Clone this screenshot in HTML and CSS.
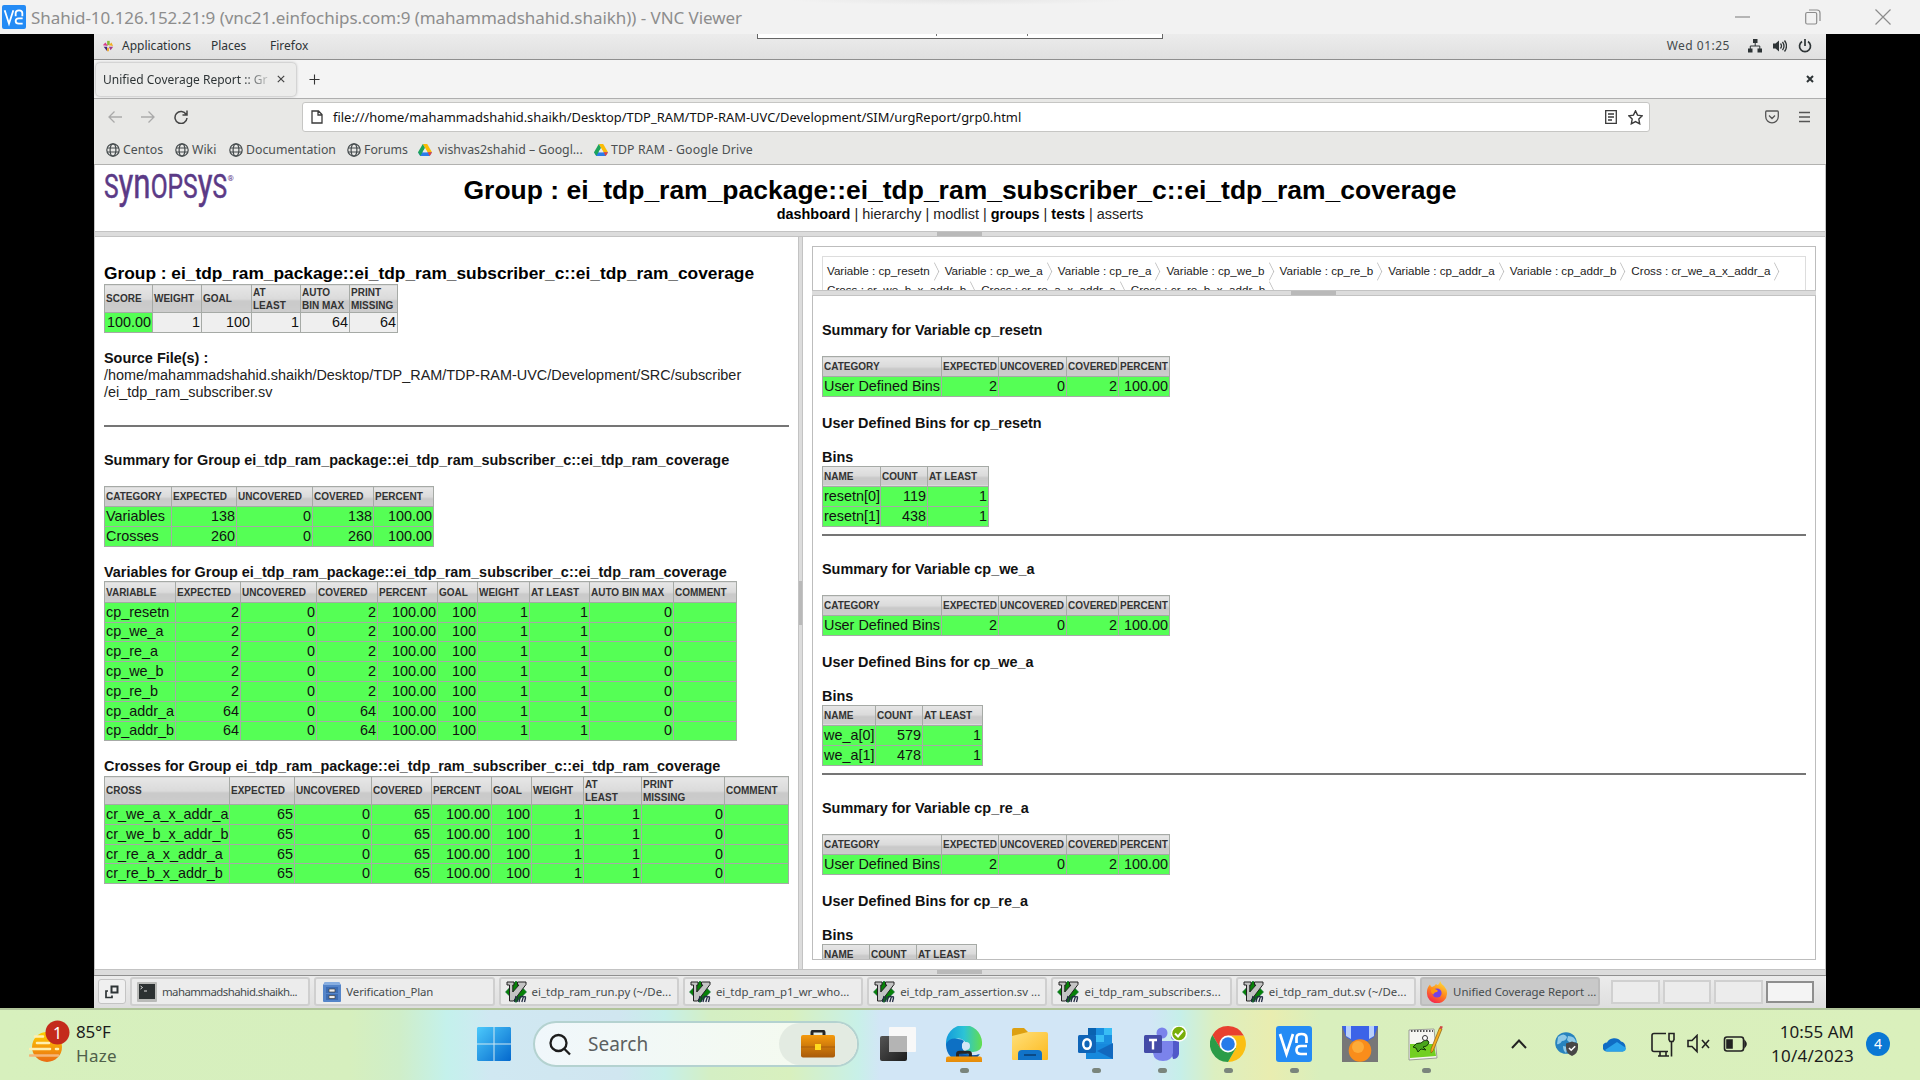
FILE: index.html
```html
<!DOCTYPE html>
<html lang="en">
<head>
<meta charset="utf-8">
<title>Shahid-10.126.152.21:9 - VNC Viewer</title>
<link rel="stylesheet" href="styles.css">
</head>
<body>
<svg width="0" height="0" class="defs">
  <defs>
    <linearGradient id="gSun" x1="0" y1="0" x2="0" y2="1"><stop offset="0" stop-color="#ffd000"/><stop offset="1" stop-color="#ea6a12"/></linearGradient>
    <linearGradient id="gWin" x1="0" y1="0" x2="1" y2="1"><stop offset="0" stop-color="#4cc9fb"/><stop offset="1" stop-color="#0468cd"/></linearGradient>
    <linearGradient id="gBag" x1="0" y1="0" x2="0" y2="1"><stop offset="0" stop-color="#f59a0c"/><stop offset="1" stop-color="#a85a0a"/></linearGradient>
    <linearGradient id="gEdge" x1="0" y1="0" x2="1" y2="0"><stop offset="0" stop-color="#149bdc"/><stop offset=".5" stop-color="#2cc3d6"/><stop offset="1" stop-color="#62de4e"/></linearGradient>
    <linearGradient id="gFold" x1="0" y1="0" x2="1" y2="1"><stop offset="0" stop-color="#ffe07a"/><stop offset="1" stop-color="#fcb91e"/></linearGradient>
    <linearGradient id="gDark" x1="0" y1="0" x2="1" y2="1"><stop offset="0" stop-color="#555"/><stop offset="1" stop-color="#1c1c1c"/></linearGradient>
    <linearGradient id="gFox" x1=".8" y1="0" x2=".3" y2="1"><stop offset="0" stop-color="#ffe23a"/><stop offset=".5" stop-color="#ff8a1c"/><stop offset="1" stop-color="#f5204f"/></linearGradient>
    <symbol id="globe" viewBox="0 0 14 14"><g fill="none" stroke="#454b4d" stroke-width="1.2"><circle cx="7" cy="7" r="6.2"/><ellipse cx="7" cy="7" rx="2.9" ry="6.2"/><path d="M1 5h12M1 9h12"/></g></symbol>
    <symbol id="drive" viewBox="0 0 14 14"><path d="M4.800 1h4.400L14 9.300H9.500z" fill="#fbbc05"/><path d="M0 9.300h14L11.700 13H2.300z" fill="#2b7bea"/><path d="M9.600 9.300H14L11.700 13z" fill="#ea4335"/><path d="M4.800 1L0 9.300 2.300 13 7 5z" fill="#1da45b"/><path d="M7 5.200L4.600 9.300h4.800z" fill="#ecebe9"/></symbol>
    <symbol id="vim" viewBox="0 0 22 22"><path d="M11 0l10.500 11L11 21.500.5 11z" fill="#078207" stroke="#063" stroke-width=".6"/><path d="M2 1h7v3H7.800v7L14 4h-1.500V1H21v2.500L8.500 20H4.500V4H2z" fill="#c4c4c4" stroke="#222" stroke-width="1"/><path d="M11 15l-1.500 6M13 15.500l-1 5.500M15.500 15l-1.500 6M16 16q3-2 2 1l-1.200 4M18 16.500q3-2 2.500.5l-1 4" stroke="#222b44" stroke-width="1.300" fill="none"/></symbol>
    <symbol id="vnc" viewBox="0 0 36 36"><rect width="36" height="36" rx="3" fill="#248bf5"/><g fill="none" stroke="#fff" stroke-width="2.700"><path d="M4 8l6.500 20L17 8"/><path d="M20.500 17V12q0-4 5-4t5 4v5"/><path d="M31 20h-6q-4.500 0-4.500 4t4.500 4h6"/></g></symbol>
    <symbol id="bag" viewBox="0 0 34 28"><path d="M11 6V2.500Q11 1 13 1h8q2 0 2 1.500V6" fill="none" stroke="#262626" stroke-width="3"/><rect y="5" width="34" height="22.500" rx="2" fill="url(#gBag)"/><path d="M0 17h34" stroke="#a85d0c" stroke-width="1"/><rect x="14" y="14" width="6" height="6" fill="#ffd91e"/></symbol>
  </defs>
</svg>

<header class="titlebar">
  <svg class="title-logo" viewBox="0 0 36 36" preserveAspectRatio="none"><use href="#vnc"/></svg>
  <span class="title-text">Shahid-10.126.152.21:9 (vnc21.einfochips.com:9 (mahammadshahid.shaikh)) - VNC Viewer</span>
  <div class="win-buttons">
    <svg viewBox="0 0 16 16"><path d="M0 8h15"/></svg>
    <svg viewBox="0 0 16 16"><rect x=".7" y="3.500" width="11" height="11.500" rx="1.500"/><path d="M4 1h8q3 0 3 3v8"/></svg>
    <svg viewBox="0 0 16 16"><path d="M.5.500l15 15M15.500.500l-15 15"/></svg>
  </div>
</header>

<main class="desktop">
  <div class="vnc-tab"><i></i><i></i></div>
  <nav class="panel-top">
    <svg class="apps" viewBox="0 0 14 14"><path d="M6 1h3v5H6z" fill="#8ab83a"/><path d="M1 6l3-3 3 4z" fill="#d63c8c"/><path d="M8 6l3-3 2 4z" fill="#f0b020"/><path d="M2 8h4v5z" fill="#42247a"/><path d="M8 8h5l-3 4z" fill="#a33b8a"/><path d="M6 9h2v4H6z" fill="#efa724"/></svg>
    <span class="m1">Applications</span><span class="m2">Places</span><span class="m3">Firefox</span>
    <span class="clock">Wed 01:25</span>
    <div class="sys">
      <svg viewBox="0 0 14 14"><path d="M5 0h4.500v4H5zM0 9.500h4.500v4H0zM9.500 9.500H14v4H9.500z" fill="#2e3436"/><path d="M7.200 4v3M2.300 10V7h9.500v3" stroke="#2e3436" fill="none"/></svg>
      <svg viewBox="0 0 14 14"><path d="M0 4.500h2.500L6 1.500v11L2.500 9.500H0z" fill="#2e3436"/><path d="M7.500 4.500q2 2.500 0 5M9.500 2.800q3 4.200 0 8.400M11.500 1.500q4 5.500 0 11" stroke="#2e3436" fill="none" stroke-width="1.300"/></svg>
      <svg viewBox="0 0 14 14"><path d="M4 2.500a5.500 5.500 0 1 0 6 0M7 0v7" stroke="#2e3436" fill="none" stroke-width="1.700"/></svg>
    </div>
  </nav>

  <div class="tabstrip">
    <div class="tab"><span class="tab-title">Unified Coverage Report :: Gr</span><svg viewBox="0 0 8 8"><path d="M.8.800l6.400 6.400M7.200.800L.8 7.200"/></svg></div>
    <svg class="plus" viewBox="0 0 12 12"><path d="M6 .5v11M.5 6h11"/></svg>
    <svg class="strip-close" viewBox="0 0 8 8"><path d="M1 1l6 6M7 1L1 7"/></svg>
  </div>

  <div class="navbar">
    <div class="nav-icons">
      <svg viewBox="0 0 14 14" class="dim"><path d="M14 7H1.500M6.500 1.500L1 7l5.500 5.500"/></svg>
      <svg viewBox="0 0 14 14" class="dim"><path d="M0 7h12.500M7.500 1.500L13 7l-5.500 5.500"/></svg>
      <svg viewBox="0 0 14 14" class="reload"><path d="M12.200 4.500A6 6 0 1 0 13 8M13 .5V5H8.500"/></svg>
    </div>
    <div class="urlbar">
      <svg viewBox="0 0 12 14" class="doc"><path d="M1 1h6.500L11 4.500V13H1zM7 1v4h4"/></svg>
      <span class="url">file:///home/mahammadshahid.shaikh/Desktop/TDP_RAM/TDP-RAM-UVC/Development/SIM/urgReport/grp0.html</span>
      <svg viewBox="0 0 12 14" class="reader"><path d="M.7.700h10.600v12.600H.7zM3 4h6M3 7h6M3 10h4"/></svg>
      <svg viewBox="0 0 14 14" class="star"><path d="M7 .8l1.900 4 4.400.6-3.200 3 .8 4.500L7 10.800 3.100 12.900l.8-4.500-3.200-3 4.400-.6z"/></svg>
    </div>
    <svg viewBox="0 0 14 14" class="pocket"><path d="M1.500 1h11q.8 0 .8 1v4.500a6.300 6.300 0 0 1-12.600 0V2q0-1 .8-1zM4 5.500l3 3 3-3"/></svg>
    <svg viewBox="0 0 12 12" class="burger"><path d="M0 1.500h11M0 6h11M0 10.500h11"/></svg>
  </div>

  <div class="bookmarks">
    <a><svg><use href="#globe"/></svg>Centos</a>
    <a><svg><use href="#globe"/></svg>Wiki</a>
    <a><svg><use href="#globe"/></svg>Documentation</a>
    <a><svg><use href="#globe"/></svg>Forums</a>
    <a class="wide"><svg><use href="#drive"/></svg>vishvas2shahid – Googl...</a>
    <a><svg><use href="#drive"/></svg>TDP RAM - Google Drive</a>
  </div>

  <section class="page">
    <header class="report-head">
      <svg class="synopsys" viewBox="0 0 130 32">
        <text x="0" y="25" textLength="123" lengthAdjust="spacingAndGlyphs" font-family="Roboto, sans-serif" font-size="33" fill="#5b3a86" stroke="#5b3a86" stroke-width=".5">S<tspan font-size="42">yn</tspan>OPS<tspan font-size="42">y</tspan>S</text>
        <text x="123.500" y="8" font-family="Roboto, sans-serif" font-size="8" fill="#5b3a86">®</text>
      </svg>
      <h1>Group : ei_tdp_ram_package::ei_tdp_ram_subscriber_c::ei_tdp_ram_coverage</h1>
      <div class="links"><b>dashboard</b> | hierarchy | modlist | <b>groups</b> | <b>tests</b> | asserts</div>
    </header>
    <div class="split-h"><i></i></div>

    <div class="frames">
      <div class="left">
        <h2>Group : ei_tdp_ram_package::ei_tdp_ram_subscriber_c::ei_tdp_ram_coverage</h2>
        <table class="tb score tall">
          <tr><th>SCORE</th><th>WEIGHT</th><th>GOAL</th><th>AT<br>LEAST</th><th>AUTO<br>BIN MAX</th><th>PRINT<br>MISSING</th></tr>
          <tr class="plain"><td class="ok">100.00</td><td>1</td><td>100</td><td>1</td><td>64</td><td>64</td></tr>
        </table>
        <p class="source"><b>Source File(s) :</b><br>/home/mahammadshahid.shaikh/Desktop/TDP_RAM/TDP-RAM-UVC/Development/SRC/subscriber<br>/ei_tdp_ram_subscriber.sv</p>
        <hr class="l-rule">
        <h3 class="h-summary">Summary for Group ei_tdp_ram_package::ei_tdp_ram_subscriber_c::ei_tdp_ram_coverage</h3>
        <table class="tb summary">
          <tr><th>CATEGORY</th><th>EXPECTED</th><th>UNCOVERED</th><th>COVERED</th><th>PERCENT</th></tr>
          <tr><td>Variables</td><td>138</td><td>0</td><td>138</td><td>100.00</td></tr>
          <tr><td>Crosses</td><td>260</td><td>0</td><td>260</td><td>100.00</td></tr>
        </table>
        <h3 class="h-vars">Variables for Group ei_tdp_ram_package::ei_tdp_ram_subscriber_c::ei_tdp_ram_coverage</h3>
        <table class="tb vars">
          <tr><th>VARIABLE</th><th>EXPECTED</th><th>UNCOVERED</th><th>COVERED</th><th>PERCENT</th><th>GOAL</th><th>WEIGHT</th><th>AT LEAST</th><th>AUTO BIN MAX</th><th>COMMENT</th></tr>
          <tr><td>cp_resetn</td><td>2</td><td>0</td><td>2</td><td>100.00</td><td>100</td><td>1</td><td>1</td><td>0</td><td></td></tr>
          <tr><td>cp_we_a</td><td>2</td><td>0</td><td>2</td><td>100.00</td><td>100</td><td>1</td><td>1</td><td>0</td><td></td></tr>
          <tr><td>cp_re_a</td><td>2</td><td>0</td><td>2</td><td>100.00</td><td>100</td><td>1</td><td>1</td><td>0</td><td></td></tr>
          <tr><td>cp_we_b</td><td>2</td><td>0</td><td>2</td><td>100.00</td><td>100</td><td>1</td><td>1</td><td>0</td><td></td></tr>
          <tr><td>cp_re_b</td><td>2</td><td>0</td><td>2</td><td>100.00</td><td>100</td><td>1</td><td>1</td><td>0</td><td></td></tr>
          <tr><td>cp_addr_a</td><td>64</td><td>0</td><td>64</td><td>100.00</td><td>100</td><td>1</td><td>1</td><td>0</td><td></td></tr>
          <tr><td>cp_addr_b</td><td>64</td><td>0</td><td>64</td><td>100.00</td><td>100</td><td>1</td><td>1</td><td>0</td><td></td></tr>
        </table>
        <h3 class="h-cross">Crosses for Group ei_tdp_ram_package::ei_tdp_ram_subscriber_c::ei_tdp_ram_coverage</h3>
        <table class="tb cross tall">
          <tr><th>CROSS</th><th>EXPECTED</th><th>UNCOVERED</th><th>COVERED</th><th>PERCENT</th><th>GOAL</th><th>WEIGHT</th><th>AT<br>LEAST</th><th>PRINT<br>MISSING</th><th>COMMENT</th></tr>
          <tr><td>cr_we_a_x_addr_a</td><td>65</td><td>0</td><td>65</td><td>100.00</td><td>100</td><td>1</td><td>1</td><td>0</td><td></td></tr>
          <tr><td>cr_we_b_x_addr_b</td><td>65</td><td>0</td><td>65</td><td>100.00</td><td>100</td><td>1</td><td>1</td><td>0</td><td></td></tr>
          <tr><td>cr_re_a_x_addr_a</td><td>65</td><td>0</td><td>65</td><td>100.00</td><td>100</td><td>1</td><td>1</td><td>0</td><td></td></tr>
          <tr><td>cr_re_b_x_addr_b</td><td>65</td><td>0</td><td>65</td><td>100.00</td><td>100</td><td>1</td><td>1</td><td>0</td><td></td></tr>
        </table>
      </div>
      <div class="split-v"><i></i></div>
      <div class="right">
        <div class="inner">
          <div class="crumb-pane">
            <div class="crumbs">
              <span>Variable : cp_resetn</span><span>Variable : cp_we_a</span><span>Variable : cp_re_a</span><span>Variable : cp_we_b</span><span>Variable : cp_re_b</span><span>Variable : cp_addr_a</span><span>Variable : cp_addr_b</span><span>Cross : cr_we_a_x_addr_a</span>
              <span>Cross : cr_we_b_x_addr_b</span><span>Cross : cr_re_a_x_addr_a</span><span>Cross : cr_re_b_x_addr_b</span>
            </div>
          </div>
          <div class="split-i"><i></i></div>
          <div class="detail">
            <article>
              <h3>Summary for Variable cp_resetn</h3>
              <table class="tb cat">
                <tr><th>CATEGORY</th><th>EXPECTED</th><th>UNCOVERED</th><th>COVERED</th><th>PERCENT</th></tr>
                <tr><td>User Defined Bins</td><td>2</td><td>0</td><td>2</td><td>100.00</td></tr>
              </table>
              <h3 class="h-udb">User Defined Bins for cp_resetn</h3>
              <h3 class="h-bins">Bins</h3>
              <table class="tb bins b1">
                <tr><th>NAME</th><th>COUNT</th><th>AT LEAST</th></tr>
                <tr><td>resetn[0]</td><td>119</td><td>1</td></tr>
                <tr><td>resetn[1]</td><td>438</td><td>1</td></tr>
              </table>
              <hr>
            </article>
            <article>
              <h3>Summary for Variable cp_we_a</h3>
              <table class="tb cat">
                <tr><th>CATEGORY</th><th>EXPECTED</th><th>UNCOVERED</th><th>COVERED</th><th>PERCENT</th></tr>
                <tr><td>User Defined Bins</td><td>2</td><td>0</td><td>2</td><td>100.00</td></tr>
              </table>
              <h3 class="h-udb">User Defined Bins for cp_we_a</h3>
              <h3 class="h-bins">Bins</h3>
              <table class="tb bins b2">
                <tr><th>NAME</th><th>COUNT</th><th>AT LEAST</th></tr>
                <tr><td>we_a[0]</td><td>579</td><td>1</td></tr>
                <tr><td>we_a[1]</td><td>478</td><td>1</td></tr>
              </table>
              <hr>
            </article>
            <article>
              <h3>Summary for Variable cp_re_a</h3>
              <table class="tb cat">
                <tr><th>CATEGORY</th><th>EXPECTED</th><th>UNCOVERED</th><th>COVERED</th><th>PERCENT</th></tr>
                <tr><td>User Defined Bins</td><td>2</td><td>0</td><td>2</td><td>100.00</td></tr>
              </table>
              <h3 class="h-udb">User Defined Bins for cp_re_a</h3>
              <h3 class="h-bins">Bins</h3>
              <table class="tb bins b3">
                <tr><th>NAME</th><th>COUNT</th><th>AT LEAST</th></tr>
              </table>
            </article>
          </div>
        </div>
      </div>
    </div>
    <div class="split-h bottom"><i></i></div>
  </section>

  <footer class="panel-bottom">
    <div class="show-desk"><svg viewBox="0 0 14 14"><path d="M6.500 1.500h6v6h-6z" stroke-width="2"/><path d="M3 6H1v6.500h6V10.500" stroke-width="1.700"/></svg></div>
    <div class="task term"><svg viewBox="0 0 20 20"><rect width="20" height="20" rx="1" fill="#b9bab8"/><rect x="2" y="2" width="16" height="15" fill="#2c3132"/><path d="M3.500 4l2 1.500-2 1.500M7 9h3" stroke="#ddd" fill="none"/></svg>mahammadshahid.shaikh...</div>
    <div class="task cab"><svg viewBox="0 0 18 20"><path d="M2 0h14l2 3v16q0 1-1 1H1q-1 0-1-1V3z" fill="#5585c9"/><path d="M2 0h14l2 3H0z" fill="#88aee0"/><path d="M3 5h12v6H3zM3 12h12v6H3z" fill="#3c6cb3"/><path d="M6 7h6v3H6zM6 13.500h6v3H6z" fill="#eee" stroke="#444" stroke-width=".7"/></svg>Verification_Plan</div>
    <div class="task v"><svg><use href="#vim"/></svg>ei_tdp_ram_run.py (~/De...</div>
    <div class="task v"><svg><use href="#vim"/></svg>ei_tdp_ram_p1_wr_who...</div>
    <div class="task v"><svg><use href="#vim"/></svg>ei_tdp_ram_assertion.sv ...</div>
    <div class="task v"><svg><use href="#vim"/></svg>ei_tdp_ram_subscriber.s...</div>
    <div class="task v"><svg><use href="#vim"/></svg>ei_tdp_ram_dut.sv (~/De...</div>
    <div class="task v on"><svg viewBox="0 0 22 22"><path d="M14 0q1 3 4 5 3.500 4 3 8A10 9.500 0 0 1 1 12.500Q.5 7 4 3.500q.5 2 2 2.500 3-1 4-3 1 1 2 1 2-1.500 2-4z" fill="url(#gFox)"/><circle cx="11" cy="12" r="4.600" fill="#7542e5"/><path d="M5 8.500q3-1.500 5 0 3 1 1 2.500-3 0-3.500 2.500Q4.500 12 5 8.500z" fill="#ff980e"/></svg>Unified Coverage Report ...</div>
    <div class="spaces"><i></i><i></i><i></i><i class="cur"></i></div>
  </footer>
</main>

<footer class="taskbar">
  <div class="weather">
    <svg viewBox="0 0 42 54"><ellipse cx="18" cy="32" rx="15" ry="15" fill="url(#gSun)"/><g stroke-width="2.600" stroke-linecap="round" fill="none"><path d="M6 21.500h8M8 28h12M1 34h20M27 34h2" stroke="#fff0b0"/><path d="M1 40.500h28" stroke="#f5b577"/></g><circle cx="28.500" cy="17.500" r="12" fill="#c42b1c"/><text x="28.500" y="23.500" text-anchor="middle" font-family="Noto Sans, sans-serif" font-size="16" fill="#fff">1</text></svg>
    <div class="wtext"><span>85°F</span><span class="haze">Haze</span></div>
  </div>
  <div class="start"><svg viewBox="0 0 34 34"><path d="M1 0h15.500v16.500H0V1zM17.500 0H33l1 1v15.500H17.500zM0 17.500h16.500V34H1l-1-1zM17.500 17.500H34V33l-1 1H17.500z" fill="url(#gWin)"/></svg></div>
  <div class="search">
    <svg class="mag" viewBox="0 0 22 22"><circle cx="9.500" cy="9.500" r="8" /><path d="M15 15l6 6"/></svg>
    <span>Search</span>
    <div class="bagpill"><svg><use href="#bag"/></svg></div>
  </div>
  <div class="apps-row">
    <div class="slot"><svg viewBox="0 0 36 36"><rect y="10" width="27" height="25" rx="2" fill="url(#gDark)"/><rect x="9" y="1" width="27" height="25" rx="1" fill="#f8f8f8"/><path d="M9 10h18v16H10q-1 0-1-1z" fill="#b4b4b4"/></svg></div>
    <div class="slot run"><svg viewBox="0 0 36 36"><path d="M0 18A18 18 0 0 1 36 16q1 9-9 10-7 0-8-3 3-3 1-6-4-6-11-4Q3 14 0 21z" fill="url(#gEdge)"/><path d="M0 18q4-7 12-5 4 0 6 2-5 6 2 12 6 4 14 1-6 9-16 8Q0 34 0 18z" fill="#0d70c4"/><path d="M12 25q6 7 21 3.500-6 8.500-16 7.500z" fill="#104f9a"/><circle cx="20" cy="20" r="4" fill="#d2e6f6"/><svg x="0" y="22" width="18" height="14"><use href="#bag"/></svg></svg></div>
    <div class="slot"><svg viewBox="0 0 36 36"><path d="M0 4q0-2 2-2h10l4 4v6H0z" fill="#dda011"/><path d="M0 10l16-4h18q2 0 2 2v25q0 1-1 1H1q-1 0-1-1z" fill="url(#gFold)"/><path d="M6 34v-6q0-4 4-4h16q4 0 4 4v6z" fill="#1173c8"/><path d="M12 29h12" stroke="#0b4a86" stroke-width="2"/></svg></div>
    <div class="slot run"><svg viewBox="0 0 36 36"><rect x="10" y="2" width="24" height="20" fill="#1a8fe0"/><path d="M10 2h8v7h-8z" fill="#0a62b0"/><path d="M26 2h8v7h-8zM18 9h8v7h-8z" fill="#38bdf5"/><path d="M8 18l27 0v15H8z" fill="#1689dd"/><path d="M35 17v16L19 25z" fill="#1168be"/><rect y="9" width="18" height="18" rx="1.500" fill="#0f65b8"/><ellipse cx="9" cy="18" rx="3.800" ry="4.800" fill="none" stroke="#fff" stroke-width="2.400"/></svg></div>
    <div class="slot run"><svg viewBox="0 0 44 36" class="teams"><circle cx="18" cy="7" r="5.500" fill="#7b83eb"/><path d="M24 15h11v13q-1 5-6 5z" fill="#5059c9"/><circle cx="31" cy="10" r="4" fill="#5059c9"/><path d="M9 15h20v12q-1 8-10 8T9 27z" fill="#7b83eb"/><rect y="9" width="18" height="18" rx="1.500" fill="#444ba8"/><path d="M5 14h8M9 14v9.500" stroke="#fff" stroke-width="2.400"/><circle cx="35" cy="7.500" r="7.500" fill="#79ae09" stroke="#fff" stroke-width="1.500"/><path d="M31 7.500l3 3 5-6" stroke="#fff" stroke-width="2" fill="none"/></svg></div>
    <div class="slot run"><svg viewBox="0 0 36 36"><path d="M18 9.500h15.800l.9 2A18 18 0 0 1 18 36l8-14z" fill="#fbbf13"/><path d="M2.400 9A18 18 0 0 1 33.800 9.500H18L10 22z" fill="#e8402f"/><path d="M2.400 9L10.500 22.500 26 22l-8 14A18 18 0 0 1 2.400 9z" fill="#2b9c48"/><circle cx="18" cy="18" r="8.500" fill="#fff"/><circle cx="18" cy="18" r="6.800" fill="#277bea"/></svg></div>
    <div class="slot run"><svg><use href="#vnc"/></svg></div>
    <div class="slot"><svg viewBox="0 0 36 36"><path d="M0 0h36v36H0z" fill="#777"/><path d="M0 0h36l-4 11-8 5H12l-8-5z" fill="#3c63e8"/><path d="M4 0h5v13l-5-3zM27 0h5v10l-5 3z" fill="#b9d0fb"/><circle cx="18" cy="24.500" r="11.300" fill="#f98d1b"/><circle cx="16" cy="21" r="6" fill="#fdab38"/></svg></div>
    <div class="slot run"><svg viewBox="0 0 36 36"><path d="M1 4l25-1 3 29-28 2z" fill="#f6f6f2" stroke="#888" stroke-width=".8"/><path d="M2 18h24l2 12-26 2z" fill="#72cf22"/><path d="M3 5h22" stroke="#555" stroke-width="2" stroke-dasharray="1.500 1.500"/><path d="M5 21q3-5 8-4l4-3q4 0 4 3-2 4-6 4l3 3-5-1-3 3-2-4z" fill="#4aa51c" stroke="#163b08" stroke-width="1"/><circle cx="17" cy="12" r="2.500" fill="#fff" stroke="#333"/><path d="M31.500 2l2.500 1-9 22-2 2 0-4z" fill="#f6ae1d" stroke="#8c5d10" stroke-width=".7"/><path d="M31.500 2l2.500 1 .8-2.500-2.500-.5z" fill="#d04545"/></svg></div>
  </div>
  <div class="tray">
    <svg class="t-up" viewBox="0 0 16 10"><path d="M1 9l7-7.500L15 9"/></svg>
    <svg class="t-globe" viewBox="0 0 24 24"><circle cx="11" cy="11" r="10.800" fill="#2783be"/><path d="M3 5q6-5 9 0-1 4-5 4-2 4-5 3zM13 4q7 0 8 6l-5 2-4-4zM8 14l5 1-2 6q-3-2-3-7z" fill="#8fc9e6"/><path d="M17 9.500l6 2v4q0 6-6 8.500-6-2.500-6-8.500v-4z" fill="#474747"/><path d="M14 16l2.200 2.200 4-4" stroke="#fff" stroke-width="1.600" fill="none"/></svg>
    <svg class="t-cloud" viewBox="0 0 24 16"><path d="M4 15.500a4.500 4.500 0 0 1 0-9 8 7 0 0 1 14-1 5.500 5.500 0 0 1 2 10z" fill="#0f6cc4"/><path d="M2 14l12-8 9 6q0 3.500-4 3.500H5q-2 0-3-1.500z" fill="#2aa3ea"/></svg>
    <svg class="t-net" viewBox="0 0 24 24"><path d="M15 1H3Q1 1 1 3v14q0 2 2 2h14M7 23.500h11M9 19v4M15 19v4M18 1h5v6l-1 2h-3l-1-2zM20.500 9v15"/></svg>
    <svg class="t-vol" viewBox="0 0 24 20"><path d="M1 6.500h4l5-5v16l-5-5H1zM15 6l7 8M22 6l-7 8"/></svg>
    <svg class="t-bat" viewBox="0 0 24 16"><path d="M4 1h14q2.500 0 2.500 2.500v9Q20.500 15 18 15H4q-2.500 0-2.500-2.500v-9Q1.500 1 4 1z"/><path d="M4 4h5v8H4zM22 5.500q2 2.500 0 5z" fill="#222"/></svg>
    <div class="time"><span>10:55 AM</span><span class="date">10/4/2023</span></div>
    <div class="count">4</div>
  </div>
</footer>
</body>
</html>
```
FILE: styles.css
```css
* { box-sizing: border-box; }
body { margin: 0; width: 1920px; height: 1080px; overflow: hidden; background: #000; font-family: "Noto Sans", sans-serif; }
h1, h2, h3, p { margin: 0; }
.defs { position: absolute; }

.titlebar { height: 34px; background: radial-gradient(ellipse 170px 5px at 960px 0, #e6e6e6, #f2f2f2); display: flex; align-items: center; padding-left: 2px; }
.title-logo { width: 24px; height: 24px; }
.title-text { margin-left: 5px; font-size: 17px; letter-spacing: -.05px; color: #8d8d8d; white-space: nowrap; }
.win-buttons { margin-left: auto; margin-right: 29px; display: flex; gap: 54px; }
.win-buttons svg { width: 16px; height: 16px; fill: none; stroke: #8c8c8c; stroke-width: 1.2; }

.desktop { position: relative; width: 1732px; height: 974px; margin-left: 94px; display: flex; flex-direction: column; background: #fff; color: #2e3436; font-size: 12px; }
.vnc-tab { position: absolute; left: 663px; top: 0; width: 406px; height: 5px; background: #fff; border: 1px solid #666; border-top: 0; display: flex; gap: 90px; padding-left: 178px; }
.vnc-tab i { width: 1px; height: 2px; background: #777; }

.panel-top { height: 26px; background: linear-gradient(#ececec, #e0e0e0); border-bottom: 1px solid #8f8f8f; display: flex; align-items: center; padding: 0 14px 2px 8px; }
.apps { width: 12px; height: 12px; }
.m1 { width: 89px; margin-left: 8px; }
.m2 { width: 59px; }
.clock { margin-left: auto; color: #444a4c; letter-spacing: .5px; }
.sys { display: flex; gap: 11px; margin-left: 18px; }
.sys svg { width: 14px; height: 14px; }

.tabstrip { height: 39px; background: #f4f4f4; border-bottom: 1px solid #aeaeae; display: flex; align-items: center; padding: 0 12px 0 2px; }
.tab { width: 200px; height: 33px; background: #ececeb; border-radius: 4px; box-shadow: 0 0 3px #999; display: flex; align-items: center; padding-left: 7px; }
.tab-title { width: 171px; overflow: hidden; white-space: nowrap; -webkit-mask-image: linear-gradient(90deg, #000 82%, transparent 100%); mask-image: linear-gradient(90deg, #000 82%, transparent 100%); }
.tab svg { width: 8px; height: 8px; margin-left: 3px; stroke: #444; stroke-width: 1.2; }
.plus { width: 11px; height: 11px; margin-left: 13px; stroke: #333; stroke-width: 1.2; }
.strip-close { width: 8px; height: 8px; margin-left: auto; stroke: #2e3436; stroke-width: 2; }

.navbar { height: 35px; background: #e8e8e6; display: flex; align-items: center; padding-top: 1px; }
.nav-icons { width: 208px; display: flex; gap: 19px; padding-left: 14px; }
.nav-icons svg { width: 14px; height: 14px; fill: none; stroke: #444; stroke-width: 1.5; }
.nav-icons .dim { stroke: #aaa; stroke-width: 1.3; }
.urlbar { width: 1348px; height: 30px; background: #fff; border: 1px solid #c6c6c4; border-radius: 3px; display: flex; align-items: center; padding: 0 6px 0 8px; }
.urlbar svg { fill: none; stroke: #3a3a3a; stroke-width: 1.3; }
.doc { width: 12px; height: 14px; }
.url { margin-left: 10px; color: #111; font-size: 12.920px; white-space: nowrap; }
.reader { width: 12px; height: 14px; margin-left: auto; margin-right: 11px; }
.star { width: 15px; height: 15px; }
.pocket { width: 14px; height: 14px; margin-left: 115px; fill: none; stroke: #555; stroke-width: 1.3; }
.burger { width: 12px; height: 12px; margin-left: 20px; stroke: #555; stroke-width: 1.300; }

.bookmarks { height: 31px; background: #e8e8e6; border-bottom: 1px solid #b2b2b0; display: flex; padding-left: 12px; color: #4b5052; font-size: 12.300px; }
.bookmarks a { display: flex; align-items: center; gap: 3px; white-space: nowrap; padding-top: 1px; }
.bookmarks svg { width: 14px; height: 14px; }
.bookmarks a:nth-child(1) { width: 69px; }
.bookmarks a:nth-child(2) { width: 54px; }
.bookmarks a:nth-child(3) { width: 118px; }
.bookmarks a:nth-child(4) { width: 71px; }
.bookmarks .wide { width: 176px; gap: 6px; }
.bookmarks a:last-child { letter-spacing: .15px; }

.page { height: 810px; font-family: "Liberation Sans", Arial, sans-serif; color: #000; font-size: 14.430px; border: 1px solid #c4c4c4; border-width: 0 1px; display: flex; flex-direction: column; }
.report-head { position: relative; height: 66px; text-align: center; padding-top: 8px; }
.synopsys { position: absolute; left: 9px; top: 8px; width: 130px; height: 32px; overflow: visible; }
h1 { font-size: 26.470px; line-height: 34px; white-space: nowrap; }
.links { line-height: 14px; color: #222; }
.links b { color: #000; }

.split-h { height: 6px; background: #dcdcdc; border: 1px solid #c3c3c3; border-width: 1px 0; display: flex; padding-left: 842px; }
.split-h i { width: 45px; background: #b9b9b9; }
.split-h.bottom { height: 6px; border-bottom-color: #dcdcdc; }
.frames { height: 732px; display: flex; }
.left { width: 703px; padding: 25px 0 0 9px; }
.split-v { width: 5px; background: #dcdcdc; border: 1px solid #c3c3c3; border-width: 0 1px; display: flex; padding-top: 344px; }
.split-v i { width: 3px; height: 44px; background: #b9b9b9; }
h2 { font-size: 17.330px; line-height: 22px; white-space: nowrap; }
h3 { font-size: 14.430px; line-height: 17px; white-space: nowrap; color: #111; }
hr { margin: 0; border: 0; height: 2px; background: #757575; }

.tb { border-collapse: collapse; table-layout: fixed; font-size: 14.400px; color: #111; }
.tb th, .tb td { border: 1px solid #a6aaa6; padding: 0 1px; text-align: right; white-space: nowrap; line-height: 17px; }
.tb th { text-align: left; font-size: 10px; line-height: 13px; color: #333; background: linear-gradient(#e7e7e7, #dadada 50%, #c9c9c9 58%, #cdcdcd); }
.tb td { background: #55ff55; }
.tb td:first-child { text-align: left; }
.tb tr { height: 19.800px; }
.tb tr:first-child { height: 20.400px; }
.tb.tall tr:first-child { height: 28px; }
.tb .plain td { background: #efefef; }
.tb .plain .ok { background: #55ff55; text-align: right; }
.score { width: 293px; }
.score th { width: 49px; }
.score th:nth-child(1) { width: 48px; }
.score th:nth-child(3) { width: 50px; }
.score th:nth-child(6) { width: 48px; }
.source { margin-top: 17px; line-height: 17.200px; white-space: nowrap; color: #222; }
.source b { color: #111; }
.l-rule { width: 685px; margin-top: 23.600px; }
.h-summary { margin-top: 25px; margin-bottom: 17px; }
.summary { width: 330px; }
.summary th:nth-child(1) { width: 67px; }
.summary th:nth-child(2) { width: 65px; }
.summary th:nth-child(3) { width: 76px; }
.summary th:nth-child(4) { width: 61px; }
.h-vars { margin-top: 17px; margin-bottom: .4px; }
.vars { width: 633px; }
.vars th:nth-child(1) { width: 71px; }
.vars th:nth-child(2) { width: 65px; }
.vars th:nth-child(3) { width: 76px; }
.vars th:nth-child(4) { width: 61px; }
.vars th:nth-child(5) { width: 60px; }
.vars th:nth-child(6) { width: 40px; }
.vars th:nth-child(7) { width: 52px; }
.vars th:nth-child(8) { width: 60px; }
.vars th:nth-child(9) { width: 84px; }
.h-cross { margin-top: 17px; margin-bottom: .7px; }
.cross { width: 685px; }
.cross th:nth-child(1) { width: 125px; }
.cross th:nth-child(2) { width: 65px; }
.cross th:nth-child(3) { width: 77px; }
.cross th:nth-child(4) { width: 60px; }
.cross th:nth-child(5) { width: 60px; }
.cross th:nth-child(6) { width: 40px; }
.cross th:nth-child(7) { width: 52px; }
.cross th:nth-child(8) { width: 58px; }
.cross th:nth-child(9) { width: 83px; }

.right { flex: 1; padding: 9px 0 0 9px; }
.inner { width: 1004px; height: 714px; border: 1px solid #bdbdbd; display: flex; flex-direction: column; }
.crumb-pane { height: 43px; padding: 9px 9px 0; overflow: hidden; }
.crumbs { height: 60px; border: 1px solid #ddd; padding: 4px 0 0 4px; display: flex; flex-wrap: wrap; align-content: flex-start; font-size: 11.650px; color: #222; }
.crumbs span { position: relative; line-height: 19px; padding-right: 15px; white-space: nowrap; }
.crumbs span::after { content: ""; position: absolute; right: 4px; top: 4px; width: 12px; height: 12px; border: solid #b4b4b4; border-width: 1.500px 1.500px 0 0; transform: scaleX(.5) rotate(45deg); }
.split-i { height: 6px; margin: 0 -1px; background: #dcdcdc; border: 1px solid #c3c3c3; border-width: 1px 0; display: flex; padding-left: 479px; }
.split-i i { width: 45px; background: #b9b9b9; }
.detail { flex: 1; overflow: hidden; padding: 0 9px; }
article { height: 239px; padding-top: 26px; }
article h3 { margin-bottom: 17px; }
article .h-udb { margin: 17.800px 0 17px; }
article .h-bins { margin-bottom: 0; }
article hr { margin-top: 7px; }
.cat { width: 348px; }
.cat th:nth-child(1) { width: 119px; }
.cat th:nth-child(2) { width: 57px; }
.cat th:nth-child(3) { width: 68px; }
.cat th:nth-child(4) { width: 52px; }
.b1 { width: 167px; }
.b1 th:nth-child(1) { width: 58px; }
.b1 th:nth-child(2) { width: 47px; }
.b2 { width: 161px; }
.b2 th:nth-child(1) { width: 53px; }
.b2 th:nth-child(2) { width: 47px; }
.b3 { width: 155px; }
.b3 th:nth-child(1) { width: 47px; }
.b3 th:nth-child(2) { width: 47px; }

.panel-bottom { flex: 1; border-top: 1px solid #8f8f8f; background: linear-gradient(#ececec, #dedede); display: flex; align-items: center; padding: 0 12px 1px 4px; gap: 4px; color: #454b4d; font-size: 11.400px; }
.show-desk { width: 28px; height: 25px; background: #f0f0f0; border: 1px solid #c4c4c4; border-radius: 3px; display: flex; align-items: center; justify-content: center; }
.show-desk svg { width: 14px; height: 14px; fill: none; stroke: #2e3436; }
.task { width: 180.300px; height: 29px; background: #ececec; border: 2px solid #cfcfcf; border-radius: 3px; display: flex; align-items: center; gap: 5px; padding-left: 5px; white-space: nowrap; }
.task svg { width: 20px; height: 20px; flex: none; }
.task.term { letter-spacing: -.55px; }
.task.cab svg { width: 18px; height: 20px; margin-left: 2px; margin-right: 0; }
.task.cab { letter-spacing: -.1px; }
.task.v { padding-left: 4px; gap: 5px; }
.task.v svg { width: 22px; height: 22px; }
.task.on { background: #c9c9c9; border-color: #bdbdbd; }
.spaces { display: flex; gap: 3px; margin-left: auto; }
.spaces i { width: 48.500px; height: 24px; border: 2px solid #d0d0d0; background: #ececec; }
.spaces .cur { border-color: #8e8e8e; background: #f4f4f4; height: 22px; margin-top: 1px; }

.taskbar { height: 72px; padding-bottom: 2px; border-top: 2px solid #b0c49a; display: flex; align-items: center; background: linear-gradient(90deg, #d7f0bd 0, #d6efbe 350px, #cfeec9 400px, #c4f1ec 447px, #d0e8f2 490px, #d0e6f0 620px, #c6efe9 665px, #d4efc4 710px, #d8f0be 790px, #c8f0e8 858px, #d2e6f6 880px, #d2e6f6 1150px, #c6efe9 1180px, #dcefc0 1215px, #e9edb0 1270px, #d9efbd 1320px, #daf0bc 1920px); color: #1b1b1b; }
.weather { width: 461px; display: flex; align-items: center; padding-left: 29px; }
.weather svg { width: 42px; height: 54px; margin-bottom: 4px; }
.wtext { margin-left: 5px; display: flex; flex-direction: column; font-size: 17px; line-height: 24px; letter-spacing: -.2px; }
.haze { color: #50604a; letter-spacing: .3px; }
.start { width: 66px; display: flex; justify-content: center; }
.start svg { width: 34px; height: 34px; }
.search { width: 326px; height: 46px; margin-left: 6px; border-radius: 23px; border: 2px solid #b4d2d0; background: linear-gradient(90deg, #f0f7fb, #f4faf0 80%, #f4fbf2); display: flex; align-items: center; padding-left: 14px; }
.mag { width: 22px; height: 23px; fill: none; stroke: #1c1c1c; stroke-width: 2.300; }
.search span { margin-left: 17px; font-size: 19px; color: #5c5f60; }
.bagpill { width: 78px; height: 42px; margin-left: auto; border-radius: 21px; background: #e3ebe2; display: flex; align-items: center; justify-content: center; }
.bagpill svg { width: 34px; height: 28px; }
.apps-row { display: flex; margin-left: 6px; }
.slot { position: relative; width: 66px; height: 68px; display: flex; align-items: center; justify-content: center; }
.slot svg { width: 36px; height: 36px; }
.slot .teams { width: 44px; margin-left: 8px; }
.run::after { content: ""; position: absolute; left: 29px; bottom: 5px; width: 9px; height: 5px; border-radius: 3px; background: #7a857c; }
.tray { flex: 1; display: flex; align-items: center; padding-left: 52px; }
.tray svg { fill: none; stroke: none; flex: none; }
.tray .t-up, .tray .t-net, .tray .t-vol, .tray .t-bat { stroke: #222; stroke-width: 1.600; }
.tray .t-up { width: 16px; height: 10px; stroke-width: 2; }
.t-globe { width: 24px; height: 24px; margin-left: 28px; }
.t-cloud { width: 24px; height: 16px; margin-left: 24px; }
.t-net { width: 24px; height: 25px; margin-left: 24px; }
.t-vol { width: 24px; height: 20px; margin-left: 12px; }
.t-bat { width: 24px; height: 16px; margin-left: 12px; }
.time { width: 107px; display: flex; flex-direction: column; align-items: flex-end; font-size: 17px; line-height: 24px; white-space: nowrap; }
.date { letter-spacing: .25px; }
.count { width: 24px; height: 24px; margin-left: 12px; border-radius: 50%; background: #0a78d4; color: #fff; font-size: 14px; line-height: 23px; text-align: center; }
```
